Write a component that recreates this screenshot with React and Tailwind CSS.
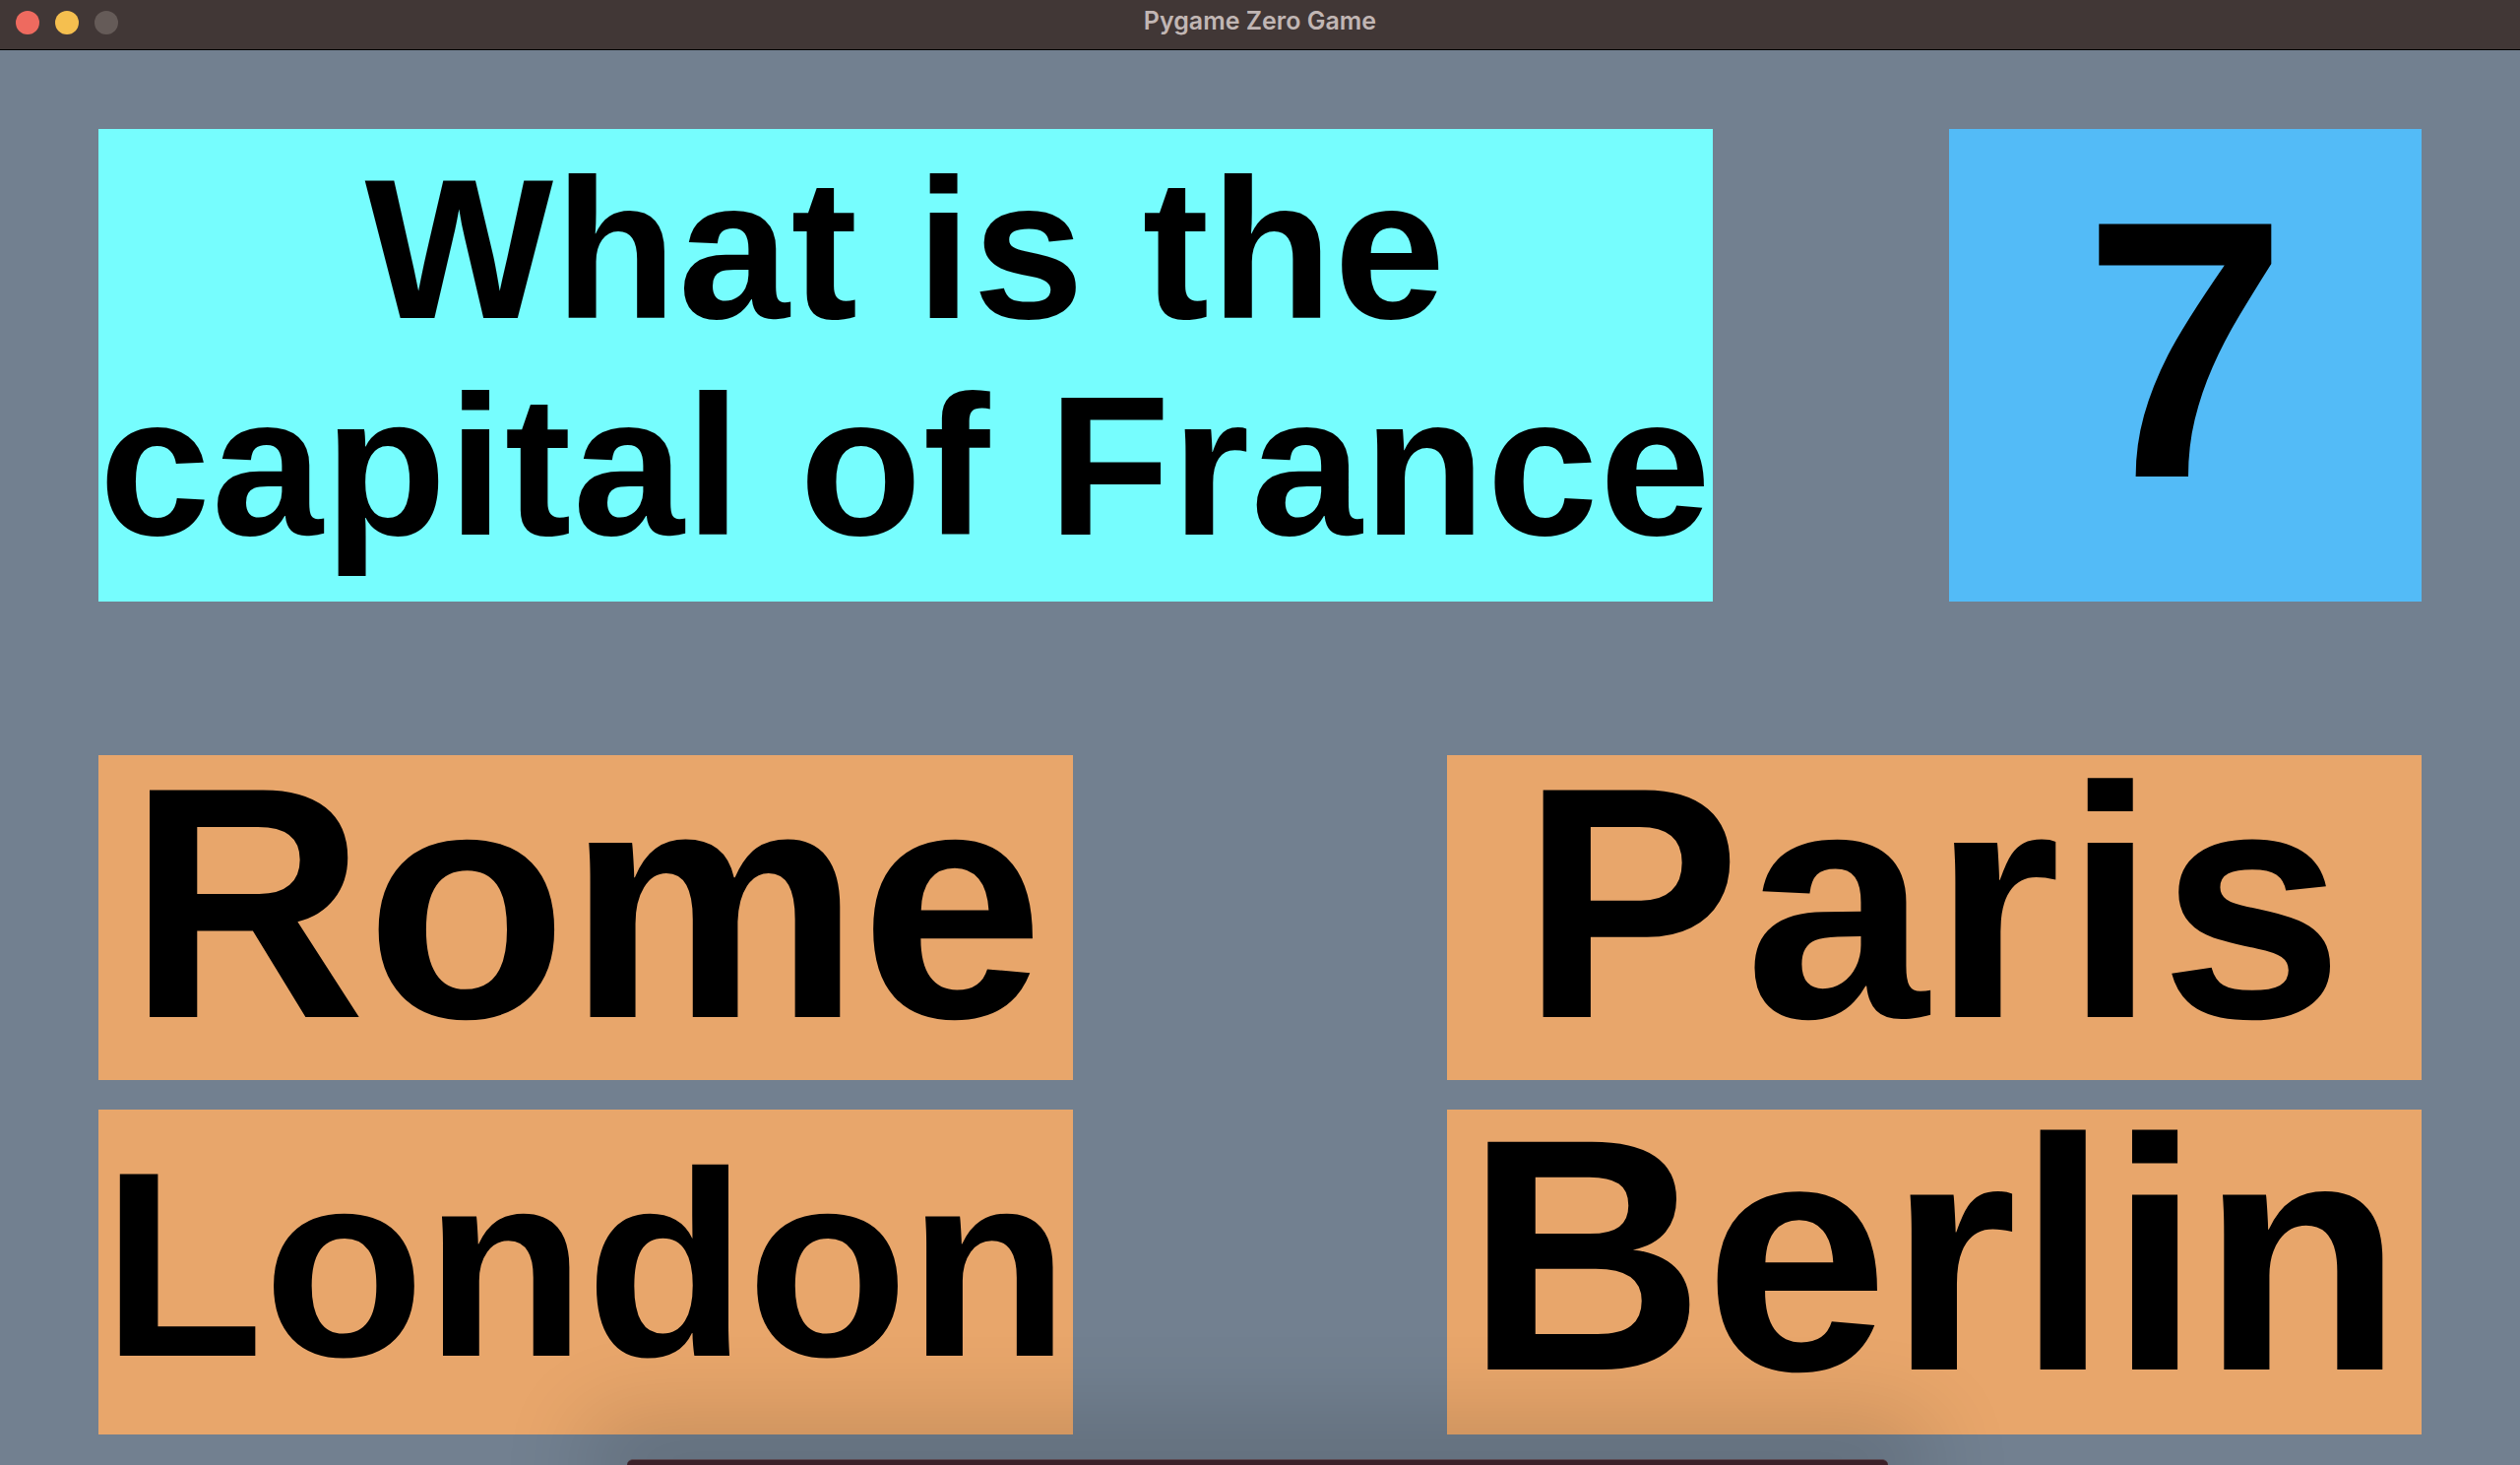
import React from 'react';

const answers = [
  { label: 'Rome', size: 'text-[335px]', shift: '-translate-y-[15px]' },
  { label: 'Paris', size: 'text-[335px] tracking-[4px]', shift: '-translate-y-[15px]' },
  { label: 'London', size: 'text-[268px]', shift: '-translate-y-[8px]' },
  { label: 'Berlin', size: 'text-[336px]', shift: '-translate-y-[17px]' },
];

function TitleBar() {
  return (
    <div className="grid grid-cols-[1fr_auto_1fr] h-[51px] bg-[#413736] border-b border-black">
      <div className="flex items-start gap-4 pl-4 pt-[11px]">
        <span className="w-6 h-6 rounded-full bg-[#ee6a5f]" />
        <span className="w-6 h-6 rounded-full bg-[#f5bf4f]" />
        <span className="w-6 h-6 rounded-full bg-[#655b58]" />
      </div>
      <div className="flex items-center pb-[6px] font-['Inter',sans-serif] text-[25px] font-semibold text-[#c1b6b4]">
        Pygame Zero Game
      </div>
      <div />
    </div>
  );
}

export default function App() {
  return (
    <div className="relative h-screen overflow-hidden bg-[#728090] font-['Liberation_Sans',Arial,sans-serif] text-black">
      <TitleBar />

      {/* Game canvas */}
      <main className="pl-[100px] pt-[80px]">
        <div className="flex gap-[240px]">
          <div className="w-[1640px] h-[480px] bg-[#76fdfe] flex flex-col items-center justify-center">
            <div className="-translate-y-[8px] text-[203px] leading-[220px] tracking-[1.5px] font-bold text-center whitespace-nowrap">
              <div>What is the</div>
              <div>capital of France</div>
            </div>
          </div>
          <div className="w-[480px] h-[480px] bg-[#53bbf7] flex items-center justify-center">
            <span className="-translate-y-[17px] text-[373px] leading-none font-bold">7</span>
          </div>
        </div>

        <div className="mt-[156px] grid grid-cols-[990px_990px] gap-x-[380px] gap-y-[30px]">
          {answers.map((a) => (
            <div key={a.label} className="h-[330px] bg-[#e8a66b] flex items-center justify-center">
              <span className={`${a.size} ${a.shift} leading-none font-bold whitespace-nowrap`}>{a.label}</span>
            </div>
          ))}
        </div>
      </main>

      {/* dock peeking in at the bottom */}
      <div className="absolute bottom-0 left-[637px] w-[1281px] h-[6px] rounded-t-[12px] bg-[#3b2129] border-t border-[#5b4a52] shadow-[0_0_90px_40px_rgba(0,0,0,0.16)]" />
    </div>
  );
}
